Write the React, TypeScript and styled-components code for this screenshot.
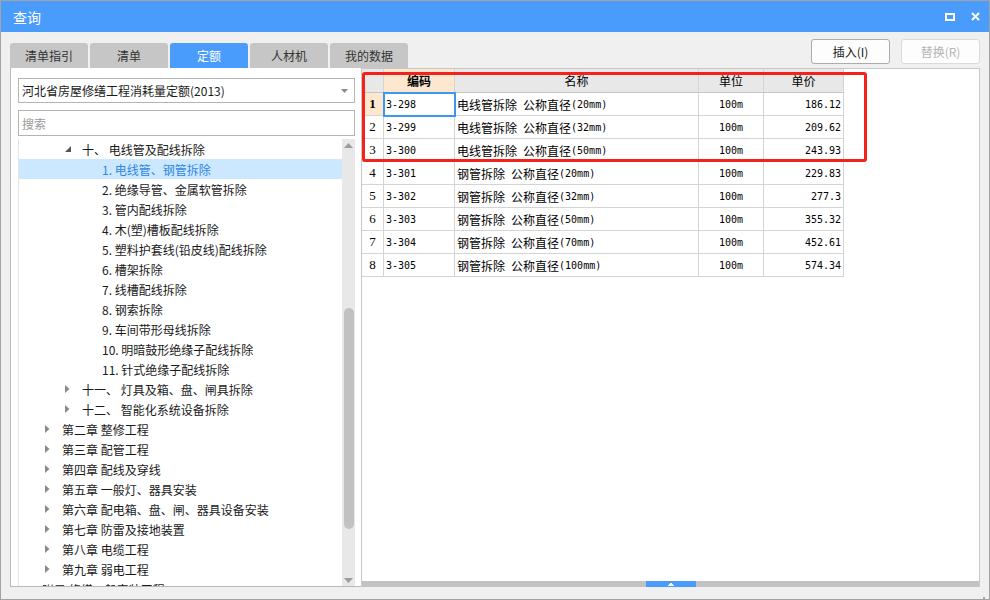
import React from 'react';
import styled, { createGlobalStyle, css } from 'styled-components';

const GlobalStyle = createGlobalStyle`
  html, body { margin: 0; padding: 0; background: #ffffff; }
  body { font-family: "Noto Sans CJK SC", "Noto Sans", sans-serif; }
  * { box-sizing: border-box; }
`;

const BLUE = '#4a9cfc';

const Window = styled.div`
  position: relative;
  width: 990px;
  height: 600px;
  border: 1px solid #a3a3a3;
  background: #f0f0f0;
  display: flex;
  flex-direction: column;
  overflow: hidden;
`;

const TitleBar = styled.div`
  height: 31px;
  flex: none;
  background: ${BLUE};
  display: flex;
  align-items: center;
  padding: 0 9px 0 12px;
  color: #ffffff;
  font-size: 14px;
`;

const TitleText = styled.span`
  line-height: 1;
`;

const TitleIcons = styled.div`
  margin-left: auto;
  display: flex;
  align-items: center;
  gap: 16px;
`;

const Body = styled.div`
  flex: 1;
  display: flex;
  flex-direction: column;
  padding: 7px 9px 12px 9px;
  min-height: 0;
`;

const TopRow = styled.div`
  height: 29px;
  flex: none;
  display: flex;
  justify-content: space-between;
`;

const Tabs = styled.div`
  align-self: flex-end;
  display: flex;
  gap: 2px;
`;

const Tab = styled.div<{ $active?: boolean }>`
  width: 78px;
  height: 25px;
  border-radius: 3px 3px 0 0;
  display: flex;
  align-items: center;
  justify-content: center;
  font-size: 12px;
  color: ${p => (p.$active ? '#ffffff' : '#333333')};
  background: ${p => (p.$active ? BLUE : '#c6c6c6')};
`;

const Buttons = styled.div`
  align-self: flex-start;
  display: flex;
  gap: 11px;
`;

const Button = styled.div<{ $disabled?: boolean }>`
  width: 79px;
  height: 25px;
  border-radius: 3px;
  display: flex;
  align-items: center;
  justify-content: center;
  font-size: 12px;
  background: #fdfdfd;
  border: 1px solid ${p => (p.$disabled ? '#dadada' : '#acacac')};
  color: ${p => (p.$disabled ? '#b4b4b4' : '#1a1a1a')};
`;

const Main = styled.div`
  flex: 1;
  display: flex;
  min-height: 0;
`;

const LeftPane = styled.div`
  width: 351px;
  flex: none;
  background: #ffffff;
  border-left: 1px solid #b9b9b9;
  border-bottom: 1px solid #b9b9b9;
  display: flex;
  flex-direction: column;
  padding: 10px 6px 0 7px;
  min-height: 0;
`;

const Select = styled.div`
  height: 25px;
  border: 1px solid #b4b4b4;
  display: flex;
  align-items: center;
  padding: 0 6px 0 3px;
  font-size: 12px;
  color: #1a1a1a;
  justify-content: space-between;
`;

const Search = styled.div`
  height: 26px;
  margin-top: 7px;
  border: 1px solid #b4b4b4;
  display: flex;
  align-items: center;
  padding: 0 3px;
  font-size: 12px;
  color: #9a9a9a;
`;

const TreeArea = styled.div`
  flex: 1;
  margin-top: 3px;
  display: flex;
  min-height: 0;
  border-left: 1px solid #e4e4e4;
`;

const TreeList = styled.div`
  flex: 1;
  overflow: hidden;
  display: flex;
  flex-direction: column;
`;

const TreeRow = styled.div<{ $selected?: boolean }>`
  height: 20px;
  flex: none;
  display: flex;
  align-items: center;
  font-size: 12px;
  white-space: nowrap;
  color: ${p => (p.$selected ? '#2f86e0' : '#1a1a1a')};
  background: ${p => (p.$selected ? '#cce8ff' : 'transparent')};
`;

const Indent = styled.div<{ $level: number }>`
  width: ${p => 23 + p.$level * 20}px;
  flex: none;
`;

const Toggle = styled.div`
  width: 20px;
  flex: none;
  display: flex;
  align-items: center;
  padding-left: 3px;
`;

const Scrollbar = styled.div`
  width: 13px;
  flex: none;
  background: #e8e8e8;
  display: flex;
  flex-direction: column;
  align-items: center;
`;

const ScrollArrow = styled.div`
  height: 12px;
  flex: none;
  display: flex;
  align-items: center;
  justify-content: center;
`;

const ScrollTrack = styled.div`
  flex: 1;
  width: 100%;
  display: flex;
  flex-direction: column;
  align-items: center;
`;

const Thumb = styled.div<{ $top: number; $h: number }>`
  margin-top: ${p => p.$top}px;
  width: 10px;
  height: ${p => p.$h}px;
  border-radius: 5px;
  background: #c1c1c1;
`;

const RightPane = styled.div`
  flex: 1;
  position: relative;
  background: #ffffff;
  border: 1px solid #c8c8c8;
  border-bottom: none;
  display: flex;
  flex-direction: column;
  min-width: 0;
`;

const Grid = styled.div`
  display: flex;
  flex-direction: column;
  width: 482px;
`;

const GridRow = styled.div<{ $h: number }>`
  display: grid;
  grid-template-columns: 22px 71px 244px 65px 80px;
  height: ${p => p.$h}px;
`;

const Cell = styled.div<{
  $align?: 'left' | 'center' | 'right';
  $bg?: string;
  $bold?: boolean;
  $selected?: boolean;
  $header?: boolean;
}>`
  border-right: 1px solid #d4d4d4;
  border-bottom: 1px solid ${p => (p.$header ? '#c6c6c6' : '#d4d4d4')};
  display: flex;
  align-items: center;
  justify-content: ${p =>
    p.$align === 'center' ? 'center' : p.$align === 'right' ? 'flex-end' : 'flex-start'};
  padding: 0 2px;
  background: ${p => p.$bg || '#ffffff'};
  font-size: 12px;
  font-weight: ${p => (p.$bold ? 700 : 400)};
  color: #000000;
  white-space: nowrap;
  overflow: hidden;
  ${p =>
    p.$selected &&
    css`
      position: relative;
      z-index: 1;
      overflow: visible;
      outline: 2px solid #3b97f0;
      outline-offset: -1px;
    `}
`;

const RowNum = styled.span<{ $bold?: boolean }>`
  font-family: "Liberation Serif", serif;
  font-size: 13px;
  font-weight: ${p => (p.$bold ? 700 : 400)};
`;

const Mono = styled.span`
  font-family: "DejaVu Sans Mono", "Liberation Mono", monospace;
  font-size: 10px;
`;

const Highlight = styled.div`
  position: absolute;
  left: 0;
  top: 3px;
  width: 505px;
  height: 90px;
  border: 3px solid #f3231b;
  border-radius: 3px;
  pointer-events: none;
  z-index: 2;
`;

const BottomBar = styled.div`
  margin-top: auto;
  height: 6px;
  flex: none;
  background: #c2c2c2;
  display: flex;
  justify-content: center;
`;

const Handle = styled.div`
  width: 50px;
  height: 6px;
  background: ${BLUE};
  display: flex;
  align-items: center;
  justify-content: center;
`;

const Grip = styled.div`
  position: absolute;
  right: 3px;
  bottom: 3px;
  width: 9px;
  height: 9px;
`;

type TreeItem = {
  level: number;
  text: string;
  state?: 'open' | 'closed';
  selected?: boolean;
};

const treeItems: TreeItem[] = [
  { level: 1, text: '十、 电线管及配线拆除', state: 'open' },
  { level: 2, text: '1. 电线管、钢管拆除', selected: true },
  { level: 2, text: '2. 绝缘导管、金属软管拆除' },
  { level: 2, text: '3. 管内配线拆除' },
  { level: 2, text: '4. 木(塑)槽板配线拆除' },
  { level: 2, text: '5. 塑料护套线(铅皮线)配线拆除' },
  { level: 2, text: '6. 槽架拆除' },
  { level: 2, text: '7. 线槽配线拆除' },
  { level: 2, text: '8. 钢索拆除' },
  { level: 2, text: '9. 车间带形母线拆除' },
  { level: 2, text: '10. 明暗鼓形绝缘子配线拆除' },
  { level: 2, text: '11. 针式绝缘子配线拆除' },
  { level: 1, text: '十一、 灯具及箱、盘、闸具拆除', state: 'closed' },
  { level: 1, text: '十二、 智能化系统设备拆除', state: 'closed' },
  { level: 0, text: '第二章 整修工程', state: 'closed' },
  { level: 0, text: '第三章 配管工程', state: 'closed' },
  { level: 0, text: '第四章 配线及穿线', state: 'closed' },
  { level: 0, text: '第五章 一般灯、器具安装', state: 'closed' },
  { level: 0, text: '第六章 配电箱、盘、闸、器具设备安装', state: 'closed' },
  { level: 0, text: '第七章 防雷及接地装置', state: 'closed' },
  { level: 0, text: '第八章 电缆工程', state: 'closed' },
  { level: 0, text: '第九章 弱电工程', state: 'closed' },
  { level: -1, text: '附录 修缮一般安装工程' },
];

type Quota = { code: string; base: string; spec: string; unit: string; price: string };

const quotas: Quota[] = [
  { code: '3-298', base: '电线管拆除', spec: '(20mm)', unit: '100m', price: '186.12' },
  { code: '3-299', base: '电线管拆除', spec: '(32mm)', unit: '100m', price: '209.62' },
  { code: '3-300', base: '电线管拆除', spec: '(50mm)', unit: '100m', price: '243.93' },
  { code: '3-301', base: '钢管拆除', spec: '(20mm)', unit: '100m', price: '229.83' },
  { code: '3-302', base: '钢管拆除', spec: '(32mm)', unit: '100m', price: '277.3' },
  { code: '3-303', base: '钢管拆除', spec: '(50mm)', unit: '100m', price: '355.32' },
  { code: '3-304', base: '钢管拆除', spec: '(70mm)', unit: '100m', price: '452.61' },
  { code: '3-305', base: '钢管拆除', spec: '(100mm)', unit: '100m', price: '574.34' },
];

const tabs = ['清单指引', '清单', '定额', '人材机', '我的数据'];

const ClosedArrow = () => (
  <svg width="5" height="8" viewBox="0 0 5 8">
    <path d="M0 0 L4.5 4 L0 8 Z" fill="#8a8a8a" />
  </svg>
);

const OpenArrow = () => (
  <svg width="6" height="6" viewBox="0 0 6 6">
    <path d="M6 0 L6 6 L0 6 Z" fill="#555555" />
  </svg>
);

const TreeNode = ({ item }: { item: TreeItem }) => (
  <TreeRow $selected={item.selected}>
    <Indent $level={item.level} />
    <Toggle>
      {item.state === 'closed' && <ClosedArrow />}
      {item.state === 'open' && <OpenArrow />}
    </Toggle>
    <span>{item.text}</span>
  </TreeRow>
);

export default function App() {
  const trackHeight = 423;
  const thumbTop = Math.round(trackHeight * 0.372);
  const thumbHeight = 221;

  return (
    <>
      <GlobalStyle />
      <Window>
        <TitleBar>
          <TitleText>查询</TitleText>
          <TitleIcons>
            <svg width="10" height="8" viewBox="0 0 10 8">
              <rect x="1" y="1" width="8" height="6" fill="none" stroke="#ffffff" strokeWidth="2" />
            </svg>
            <svg width="9" height="9" viewBox="0 0 9 9">
              <path d="M1 1 L8 8 M8 1 L1 8" stroke="#ffffff" strokeWidth="2" />
            </svg>
          </TitleIcons>
        </TitleBar>
        <Body>
          <TopRow>
            <Tabs>
              {tabs.map(t => (
                <Tab key={t} $active={t === '定额'}>
                  {t}
                </Tab>
              ))}
            </Tabs>
            <Buttons>
              <Button>插入(I)</Button>
              <Button $disabled>替换(R)</Button>
            </Buttons>
          </TopRow>
          <Main>
            <LeftPane>
              <Select>
                <span>河北省房屋修缮工程消耗量定额(2013)</span>
                <svg width="7" height="4" viewBox="0 0 7 4">
                  <path d="M0 0 L7 0 L3.5 4 Z" fill="#8a8a8a" />
                </svg>
              </Select>
              <Search>搜索</Search>
              <TreeArea>
                <TreeList>
                  {treeItems.map(item => (
                    <TreeNode key={item.text} item={item} />
                  ))}
                </TreeList>
                <Scrollbar>
                  <ScrollArrow>
                    <svg width="9" height="5" viewBox="0 0 9 5">
                      <path d="M0 5 L4.5 0 L9 5 Z" fill="#9c9c9c" />
                    </svg>
                  </ScrollArrow>
                  <ScrollTrack>
                    <Thumb $top={thumbTop} $h={thumbHeight} />
                  </ScrollTrack>
                  <ScrollArrow>
                    <svg width="9" height="5" viewBox="0 0 9 5">
                      <path d="M0 0 L9 0 L4.5 5 Z" fill="#9c9c9c" />
                    </svg>
                  </ScrollArrow>
                </Scrollbar>
              </TreeArea>
            </LeftPane>
            <RightPane>
              <Grid>
                <GridRow $h={24}>
                  <Cell $header $bg="#e8e8e8" />
                  <Cell $header $bg="#fde8cf" $align="center" $bold>
                    编码
                  </Cell>
                  <Cell $header $bg="#e8e8e8" $align="center">
                    名称
                  </Cell>
                  <Cell $header $bg="#e8e8e8" $align="center">
                    单位
                  </Cell>
                  <Cell $header $bg="#e8e8e8" $align="center">
                    单价
                  </Cell>
                </GridRow>
                {quotas.map((q, i) => (
                  <GridRow key={q.code} $h={23}>
                    <Cell $align="center" $bg={i === 0 ? '#fde8cf' : '#ffffff'}>
                      <RowNum $bold={i === 0}>{i + 1}</RowNum>
                    </Cell>
                    <Cell $selected={i === 0}>
                      <Mono>{q.code}</Mono>
                    </Cell>
                    <Cell>
                      <span>{q.base}</span>
                      <Mono>&nbsp;</Mono>
                      <span>公称直径</span>
                      <Mono>{q.spec}</Mono>
                    </Cell>
                    <Cell $align="center">
                      <Mono>{q.unit}</Mono>
                    </Cell>
                    <Cell $align="right">
                      <Mono>{q.price}</Mono>
                    </Cell>
                  </GridRow>
                ))}
              </Grid>
              <Highlight />
              <BottomBar>
                <Handle>
                  <svg width="6" height="3" viewBox="0 0 6 3">
                    <path d="M2 0 H4 V1 H5 V2 H6 V3 H0 V2 H1 V1 H2 Z" fill="#ffffff" />
                  </svg>
                </Handle>
              </BottomBar>
            </RightPane>
          </Main>
        </Body>
        <Grip>
          <svg width="9" height="9" viewBox="0 0 9 9">
            <rect x="6" y="0" width="2" height="2" fill="#a6a6a6" />
            <rect x="3" y="3" width="2" height="2" fill="#a6a6a6" />
            <rect x="6" y="3" width="2" height="2" fill="#a6a6a6" />
            <rect x="0" y="6" width="2" height="2" fill="#a6a6a6" />
            <rect x="3" y="6" width="2" height="2" fill="#a6a6a6" />
            <rect x="6" y="6" width="2" height="2" fill="#a6a6a6" />
          </svg>
        </Grip>
      </Window>
    </>
  );
}
